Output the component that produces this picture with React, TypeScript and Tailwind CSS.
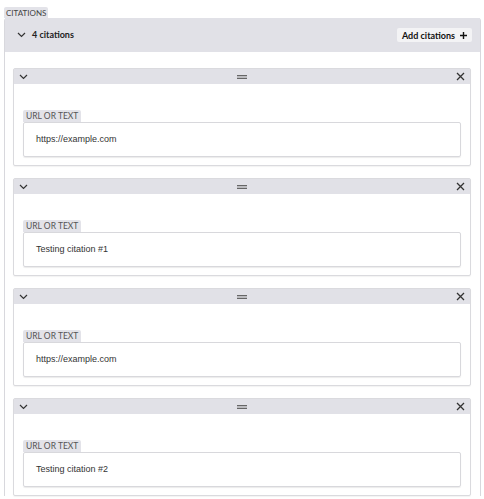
const citations = [
  "https://example.com",
  "Testing citation #1",
  "https://example.com",
  "Testing citation #2",
];

function Chevron() {
  return (
    <svg width="9" height="6" viewBox="0 0 9 6" fill="none">
      <path d="M1 1l3.5 3.5L8 1" stroke="#333" strokeWidth="1.2" />
    </svg>
  );
}

function DragHandle() {
  return (
    <svg width="10" height="4" viewBox="0 0 10 4" fill="none">
      <rect x="0" y="0" width="10" height="1.3" fill="#666" />
      <rect x="0" y="2.7" width="10" height="1.3" fill="#666" />
    </svg>
  );
}

function Close() {
  return (
    <svg width="9" height="9" viewBox="0 0 9 9" fill="none">
      <path d="M1 1l7 7M8 1l-7 7" stroke="#333" strokeWidth="1.3" />
    </svg>
  );
}

function CitationCard({ value }: { value: string }) {
  return (
    <div className="border border-[#dadade] rounded-[2px] bg-white shadow-[0_1px_1px_rgba(0,0,0,0.05)]">
      <div className="h-[15px] bg-[#e1e1e7] flex items-center justify-between px-[5px]">
        <Chevron />
        <DragHandle />
        <Close />
      </div>
      <div className="pt-[26px] pb-[8px] px-[9px] flex flex-col items-start">
        <div className="h-[12px] flex items-center px-[3px] bg-[#e3e3e9] rounded-t-[2px] text-[8.5px] leading-none text-[#555] font-['Lato',sans-serif]">
          URL OR TEXT
        </div>
        <div className="self-stretch h-[35px] border border-[#d8d8dc] rounded-[2px] shadow-[0_1px_1px_rgba(0,0,0,0.08)] flex items-center pl-[12px] text-[9px] text-[#333] font-['Liberation_Sans',sans-serif]">
          {value}
        </div>
      </div>
    </div>
  );
}

export default function App() {
  return (
    <div className="w-[484px] h-[499px] bg-white overflow-hidden font-['Lato',sans-serif]">
      <div className="pt-[7px] pl-[4px] flex">
        <div className="h-[11px] flex items-center px-[2px] bg-[#e3e3e9] text-[8px] leading-none text-[#444] rounded-t-[2px]">
          CITATIONS
        </div>
      </div>
      <div className="ml-[4px] mr-[3px] border-x border-[#d8d8dd] rounded-t-[3px]">
        <div className="h-[34px] bg-[#e1e1e7] flex items-center justify-between pl-[12px] pr-[8px]">
          <div className="flex items-center gap-[6px]">
            <Chevron />
            <span className="text-[9px] font-bold text-[#222]">4 citations</span>
          </div>
          <button className="h-[14px] px-[5px] bg-[#f3f3f5] rounded-[2px] flex items-center gap-[5px] text-[9px] leading-none font-bold text-[#111]">
            Add citations
            <svg width="7" height="7" viewBox="0 0 7 7">
              <path d="M3.5 0v7M0 3.5h7" stroke="#111" strokeWidth="1.4" />
            </svg>
          </button>
        </div>
        <div className="pt-[16px] pl-[8px] pr-[9px] flex flex-col gap-[12px]">
          {citations.map((c, i) => (
            <CitationCard key={i} value={c} />
          ))}
        </div>
      </div>
    </div>
  );
}
